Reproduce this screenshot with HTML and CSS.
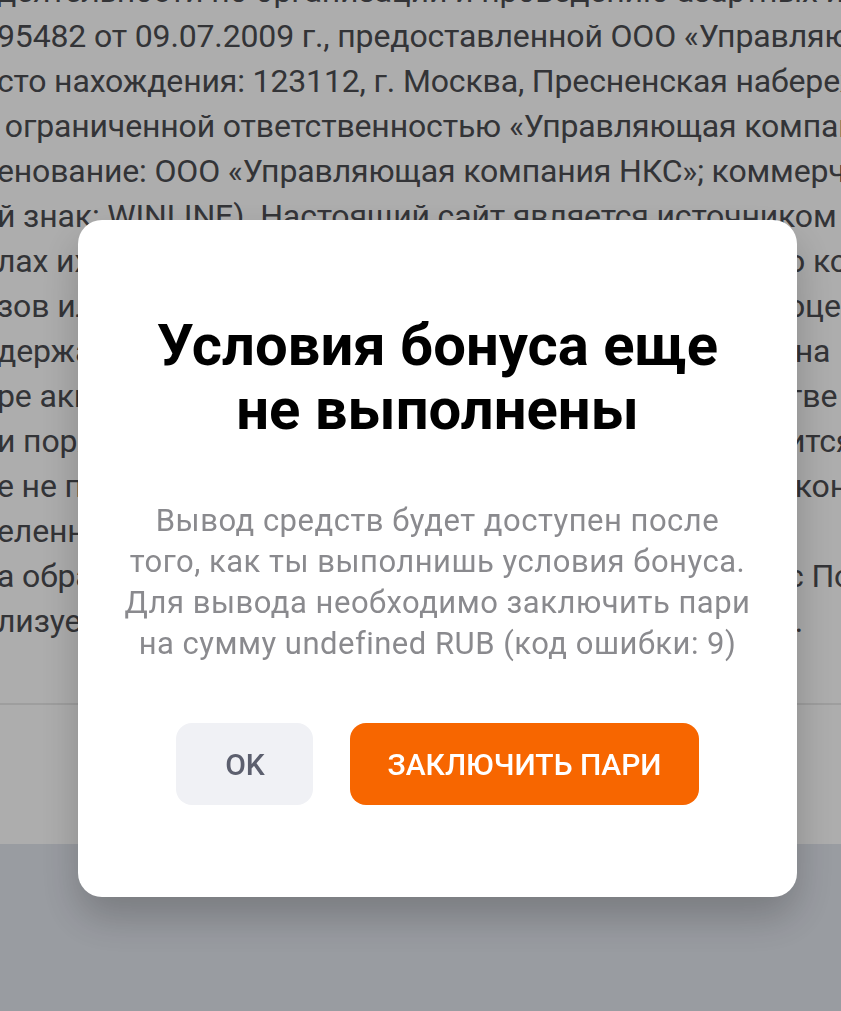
FILE: index.html
```html
<!DOCTYPE html>
<html lang="ru">
<head>
    <meta charset="UTF-8">
    <meta name="viewport" content="width=device-width, initial-scale=1.0">
    <title>Вывод средств</title>
    <link rel="stylesheet" href="styles.css">
</head>
<body>
    <div class="page">
        <div class="legal">
            <p class="legal-line">деятельности по организации и проведению азартных игр в букмекерских конторах</p>
            <p class="legal-line">95482 от 09.07.2009 г., предоставленной ООО «Управляющая компания НКС»</p>
            <p class="legal-line">сто нахождения: 123112, г. Москва, Пресненская набережная, д. 10</p>
            <p class="legal-line">&nbsp;ограниченной ответственностью «Управляющая компания НКС»</p>
            <p class="legal-line">енование: ООО «Управляющая компания НКС»; коммерческое обозначение</p>
            <p class="legal-line">й знак: WINLINE). Настоящий сайт является источником информации</p>
            <div class="legal-row"><span>лах их проведения, а также о результатах спортивных соревнований и</span><span>о коэффициентах</span></div>
            <div class="legal-row"><span>зов или иных сведений, которые используются для организации</span><span>оцессе</span></div>
            <div class="legal-row"><span>держания пари, предусмотренные законодательством, а также</span><span>&nbsp;на</span></div>
            <div class="legal-row"><span>ре акций и специальных предложений, которые</span><span>тве</span></div>
            <div class="legal-row"><span>и порядке участия в них, сведения о которых не являются</span><span>ится</span></div>
            <div class="legal-row"><span>е не предназначена для лиц младше 18 лет и не может</span><span>&nbsp;кон</span></div>
            <div class="legal-row"><span>еленного круга лиц в рамках организации азартных игр</span><span></span></div>
            <div class="legal-row"><span>а обращения в службу поддержки клиентов в соответствии</span><span>с По</span></div>
            <div class="legal-row"><span>лизуется на территории Российской Федерации</span><span>&nbsp;.</span></div>
        </div>
        <div class="page-bottom"></div>
        <footer class="footer"></footer>
    </div>

    <div class="overlay">
        <div class="modal">
            <h2 class="modal-title">Условия бонуса еще не выполнены</h2>
            <p class="modal-text">Вывод средств будет доступен после того, как ты выполнишь условия бонуса. Для вывода необходимо заключить пари на сумму undefined RUB (код ошибки: 9)</p>
            <div class="modal-actions">
                <button class="btn btn-light">OK</button>
                <button class="btn btn-primary">Заключить пари</button>
            </div>
        </div>
    </div>
</body>
</html>
```

FILE: styles.css
```css
html, body {
    margin: 0;
    padding: 0;
}
body {
    font-family: Roboto, "Noto Sans", sans-serif;
    background: #ffffff;
    overflow: hidden;
    height: 1011px;
}
.page {
    color: #4c4d52;
}
.legal {
    margin-top: -31px;
    margin-left: -3px;
    font-size: 32px;
    line-height: 45px;
    letter-spacing: -0.15px;
    white-space: nowrap;
}
.legal-line {
    margin: 0;
}
.legal-row {
    display: grid;
    grid-template-columns: 790px auto;
}
.legal-row span {
    overflow: hidden;
}
.page-bottom {
    height: 59px;
    border-bottom: 2px solid #e9e9e9;
}
.footer {
    margin-top: 139px;
    height: 200px;
    background: #e2e6ee;
}
.overlay {
    position: fixed;
    inset: 0;
    background: rgba(0, 0, 0, 0.32);
    display: flex;
    align-items: flex-start;
    padding: 220px 0 0 78px;
}
.modal {
    width: 719px;
    box-sizing: border-box;
    background: #fff;
    border-radius: 24px;
    padding: 93px 45px 92px;
    text-align: center;
    box-shadow: 0 20px 40px rgba(0, 0, 0, 0.22);
}
.modal-title {
    margin: 0;
    font-size: 58px;
    line-height: 64px;
    font-weight: 700;
    color: #000;
    padding: 0 15px;
}
.modal-text {
    margin: 59px 0 0;
    font-size: 31px;
    line-height: 41px;
    letter-spacing: 0.5px;
    color: #8a8a8e;
}
.modal-actions {
    display: flex;
    justify-content: center;
    gap: 37px;
    margin-top: 59px;
}
.btn {
    height: 82px;
    border: none;
    border-radius: 16px;
    font-family: inherit;
    font-size: 30px;
    font-weight: 500;
    text-transform: uppercase;
    cursor: pointer;
}
.btn-light {
    width: 137px;
    background: #f0f1f5;
    color: #5c5f6e;
}
.btn-primary {
    padding: 0 37px;
    background: #f76600;
    color: #fff;
}
```
